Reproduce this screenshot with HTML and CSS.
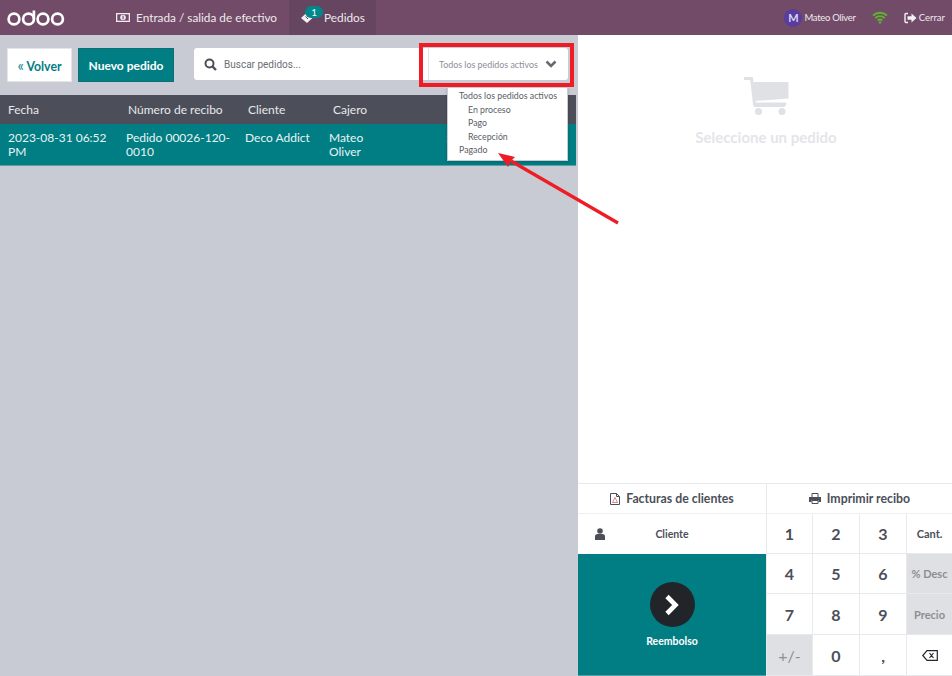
FILE: index.html
```html
<!doctype html>
<html lang="es">
  <head>
    <meta charset="utf-8">
    <title>Pedidos</title>
    <link rel="stylesheet" href="styles.css">
  </head>
  <body>
    <div class="topbar">
      <div class="logo">
        <svg width="58" height="20" viewBox="0 0 58 20" role="img" aria-label="odoo"><g fill="none" stroke="#fff" stroke-width="2.700"><circle cx="7" cy="11" r="5.400"/><circle cx="21.500" cy="11" r="5.400"/><path d="M26.900 11V2.500"/><circle cx="36" cy="11" r="5.400"/><circle cx="50.500" cy="11" r="5.400"/></g></svg>
      </div>
      <div class="tab cash">
        <svg width="14" height="9" viewBox="0 0 14 9"><rect width="14" height="9" fill="#f0e9ee"/><rect x="1.300" y="1.300" width="11.400" height="6.400" fill="#714b67"/><circle cx="7" cy="4.500" r="2.800" fill="#f0e9ee"/><rect x="6.500" y="2.700" width="1.100" height="3.600" fill="#714b67"/></svg>
        Entrada / salida de efectivo
      </div>
      <div class="tab active">
        <svg width="13" height="13" viewBox="0 0 13 13"><path d="M7 1.500 12.500 7 7 12 1 7Z" fill="#f5f0f4"/><path d="M5.500 5.500 8 8" stroke="#654560" stroke-width="1"/></svg>
        <span class="badge">1</span>
        Pedidos
      </div>
      <div class="status">
        <span class="avatar">M</span>
        <span class="user">Mateo Oliver</span>
        <svg class="wifi" width="16" height="13" viewBox="0 0 16 13"><path d="M1 4.500C5 .8 11 .8 15 4.500M3.300 7C6 4.600 10 4.600 12.700 7M5.600 9.400C7 8.300 9 8.300 10.400 9.400" fill="none" stroke="#5cb531" stroke-width="1.800"/><circle cx="8" cy="11.500" r="1.300" fill="#5cb531"/></svg>
        <span class="close">
          <svg width="13" height="12" viewBox="0 0 13 12"><path d="M4 1.500H2Q1 1.500 1 2.500V9.500Q1 10.500 2 10.500H4" fill="none" stroke="#f5f0f4" stroke-width="1.400"/><path d="M3.500 4.200H7.500V1.500L12.500 6 7.500 10.500V7.800H3.500Z" fill="#f5f0f4"/></svg>
          Cerrar
        </span>
      </div>
    </div>

    <div class="main">
      <div class="orders">
        <div class="controls">
          <button class="btn back"><span class="chev">«</span> Volver</button>
          <button class="btn new">Nuevo pedido</button>
          <div class="search">
            <svg width="13" height="13" viewBox="0 0 13 13"><circle cx="5.500" cy="5.500" r="4" fill="none" stroke="#4c4f59" stroke-width="2"/><path d="M8.500 8.500 12 12" stroke="#4c4f59" stroke-width="2.400"/></svg>
            <span>Buscar pedidos...</span>
          </div>
          <div class="filter">
            <span>Todos los pedidos activos</span>
            <svg width="12" height="8" viewBox="0 0 12 8"><path d="M1.500 1.500 6 6 10.500 1.500" fill="none" stroke="#666a73" stroke-width="2.600"/></svg>
          </div>
        </div>
        <div class="table">
          <div class="row head">
            <div class="c-date">Fecha</div>
            <div class="c-num">Número de recibo</div>
            <div class="c-client">Cliente</div>
            <div class="c-cashier">Cajero</div>
          </div>
          <div class="row order">
            <div class="c-date">2023-08-31 06:52 PM</div>
            <div class="c-num">Pedido 00026-120-0010</div>
            <div class="c-client">Deco Addict</div>
            <div class="c-cashier">Mateo Oliver</div>
            <div class="c-total">$</div>
          </div>
        </div>
      </div>

      <div class="detail">
        <div class="empty">
          <svg class="cart" width="46" height="40" viewBox="0 0 46 40"><path d="M1 1.500H7.500L10.500 27H41" fill="none" stroke="#e0e1e5" stroke-width="3" stroke-linecap="round"/><path d="M9 5H44.500V21.500L11 24Z" fill="#e0e1e5"/><circle cx="14.500" cy="34.500" r="3.500" fill="#e0e1e5"/><circle cx="38" cy="34.500" r="3.500" fill="#e0e1e5"/><rect x="10" y="27" width="31" height="3" fill="#e0e1e5"/></svg>
          <div class="empty-text">Seleccione un pedido</div>
        </div>
        <div class="actions">
          <div class="action">
            <svg width="10" height="12" viewBox="0 0 10 12"><path d="M.500.500H6.500L9.500 3.500V11.500H.500Z M6.500.500V3.500H9.500" fill="none" stroke="#4c4f59"/><path d="M2.500 9.500 5 4.500 7.500 9.500Z" fill="none" stroke="#d9534f" stroke-width=".7"/></svg>
            Facturas de clientes
          </div>
          <div class="action">
            <svg width="12" height="11" viewBox="0 0 12 11"><path d="M3 4V.500H9V4" fill="none" stroke="#4c4f59"/><path d="M0 4H12V9H9.500V7H2.500V9H0Z" fill="#4c4f59"/><path d="M3 7.500H9V10.500H3Z" fill="none" stroke="#4c4f59"/></svg>
            Imprimir recibo
          </div>
        </div>
        <div class="pad">
          <div class="customer">
            <svg width="10" height="12" viewBox="0 0 10 12"><circle cx="5" cy="3" r="2.800" fill="#4c4f59"/><path d="M0 12V8.500Q0 6 2.500 6H7.500Q10 6 10 8.500V12Z" fill="#4c4f59"/></svg>
            <span>Cliente</span>
          </div>
          <div class="pay">
            <span class="pay-circle">
              <svg width="16" height="22" viewBox="0 0 16 22"><path d="M3 2.500 11.500 11 3 19.500" fill="none" stroke="#fff" stroke-width="4.600"/></svg>
            </span>
            <span class="pay-label">Reembolso</span>
          </div>
          <div class="keys">
            <div class="key">1</div><div class="key">2</div><div class="key">3</div><div class="key mode">Cant.</div>
            <div class="key">4</div><div class="key">5</div><div class="key">6</div><div class="key mode off">% Desc</div>
            <div class="key">7</div><div class="key">8</div><div class="key">9</div><div class="key mode off">Precio</div>
            <div class="key sign">+/-</div><div class="key">0</div><div class="key">,</div>
            <div class="key">
              <svg width="16" height="11" viewBox="0 0 16 11"><path d="M5 .700H15.300V10.300H5L.800 5.500Z M7.500 3 11.500 8M11.500 3 7.500 8" fill="none" stroke="#23262c" stroke-width="1.200"/></svg>
            </div>
          </div>
        </div>
      </div>
    </div>

    <!-- dropdown + annotation sit over the page -->
    <div class="menu">
      <div>Todos los pedidos activos</div>
      <div class="sub">En proceso</div>
      <div class="sub">Pago</div>
      <div class="sub">Recepción</div>
      <div>Pagado</div>
    </div>
    <div class="redbox"></div>
    <svg class="arrow" width="140" height="90" viewBox="0 0 140 90"><path d="M126 76 19 14" stroke="#ee1c25" stroke-width="3.200"/><path d="M6 6 23 10 19 14 16 20Z" fill="#ee1c25"/></svg>
  </body>
</html>
```

FILE: styles.css
```css
* {
  box-sizing: border-box;
}

body {
  margin: 0;
  width: 952px;
  height: 676px;
  overflow: hidden;
  position: relative;
  background-color: #c8cbd3;
  font-family: Lato, "Liberation Sans", sans-serif;
  color: #4c4f59;
}

.topbar {
  height: 35px;
  display: flex;
  align-items: center;
  background-color: #714b67;
  color: #f0e9ee;
  font-size: 11.800px;
}

.logo {
  width: 102px;
  padding-left: 7px;
  display: flex;
  align-items: center;
}

.tab {
  height: 35px;
  padding: 0 12px 0 14px;
  display: flex;
  align-items: center;
  gap: 6px;
  position: relative;
}

.tab.active {
  background-color: #654560;
  padding: 0 11px;
  gap: 11px;
}

.badge {
  position: absolute;
  left: 16px;
  top: 6px;
  width: 18px;
  height: 12px;
  border-radius: 6px;
  background-color: #00878c;
  color: #f0fafa;
  font-size: 10px;
  line-height: 12px;
  text-align: center;
}

.status {
  margin-left: auto;
  display: flex;
  align-items: center;
  padding-right: 7px;
  font-size: 9.500px;
}

.avatar {
  width: 18px;
  height: 18px;
  border-radius: 50%;
  background-color: #5a3b9e;
  color: #d5d8f5;
  font-weight: bold;
  font-size: 11px;
  line-height: 18px;
  text-align: center;
  margin-right: 2px;
}

.user {
  letter-spacing: -0.3px;
}

.wifi {
  margin: 0 16px;
}

.close {
  display: flex;
  align-items: center;
  gap: 2px;
}

.main {
  height: 641px;
  display: flex;
}

.orders {
  width: 578px;
}

.controls {
  height: 60px;
  padding: 13px 0 0 7px;
  display: flex;
  align-items: flex-start;
}

.btn {
  height: 34px;
  padding: 0;
  font-family: inherit;
  font-weight: bold;
}

.back {
  width: 65px;
  background-color: #fff;
  border: 1px solid #e4e5e9;
  color: #017e84;
  font-size: 12.300px;
}

.chev {
  font-size: 15px;
  font-weight: normal;
}

.new {
  width: 96px;
  margin-left: 6px;
  background-color: #017e84;
  border: 1px solid #0e6f75;
  color: #fff;
  font-size: 12px;
}

.search {
  width: 234px;
  height: 32px;
  margin-left: 20px;
  padding-left: 10px;
  display: flex;
  align-items: center;
  gap: 7px;
  background-color: #fff;
  border-radius: 3px 0 0 3px;
  font-family: Roboto, sans-serif;
  font-size: 10px;
  color: #6b6e76;
}

.filter {
  width: 140px;
  height: 32px;
  padding: 0 11px 0 10px;
  display: flex;
  align-items: center;
  justify-content: space-between;
  background-color: #fff;
  border-left: 1px solid #e4e5e9;
  border-radius: 0 3px 3px 0;
  font-size: 8.900px;
  white-space: nowrap;
  color: #8b8e96;
}

.table {
  width: 576px;
}

.row {
  display: flex;
}

.row > div {
  flex: none;
}

.head {
  height: 29px;
  align-items: center;
  background-color: #4c4f59;
  color: #e8e9ec;
  font-size: 12px;
}

.head .c-date {
  width: 128px;
  padding-left: 8px;
}

.head .c-num {
  width: 120px;
}

.head .c-client {
  width: 85px;
}

.order {
  height: 42px;
  padding-top: 7px;
  background-color: #017e84;
  border-bottom: 1px solid #5f9ea3;
  color: #e8f4f4;
  font-size: 12px;
  line-height: 14px;
}

.order .c-date {
  width: 126px;
  padding: 0 8px;
}

.order .c-num {
  width: 119px;
  padding-right: 10px;
}

.order .c-client {
  width: 84px;
}

.order .c-cashier {
  width: 50px;
}

.order .c-total {
  margin-left: 67px;
}

.detail {
  width: 374px;
  height: 641px;
  display: flex;
  flex-direction: column;
  background-color: #fff;
}

.empty {
  height: 448px;
  padding-top: 42px;
  display: flex;
  flex-direction: column;
  align-items: center;
}

.cart {
  margin-left: 4px;
}

.empty-text {
  margin-top: 11px;
  margin-left: 2px;
  font-size: 15px;
  font-weight: bold;
  color: #e4e5e9;
}

.actions {
  height: 30px;
  display: grid;
  grid-template-columns: 188px 186px;
  border-top: 1px solid #e8e9ec;
  font-size: 12.300px;
  font-weight: bold;
}

.action {
  display: flex;
  align-items: center;
  justify-content: center;
  gap: 6px;
}

.action + .action {
  border-left: 1px solid #e8e9ec;
}

.pad {
  height: 163px;
  display: grid;
  grid-template-columns: 188px 186px;
  grid-template-rows: 40px 122px;
  border-top: 1px solid #eeeff1;
}

.customer {
  display: flex;
  align-items: center;
  padding-left: 17px;
  font-size: 10.500px;
  font-weight: bold;
}

.customer span {
  width: 134px;
  text-align: center;
}

.pay {
  grid-column: 1;
  display: flex;
  flex-direction: column;
  align-items: center;
  padding-top: 28px;
  background-color: #017e84;
  border-bottom: 1px solid #5f9ea3;
  color: #fff;
}

.pay-circle {
  width: 45px;
  height: 45px;
  border-radius: 50%;
  background-color: #212529;
  display: flex;
  align-items: center;
  justify-content: center;
}

.pay-label {
  margin-top: 8px;
  font-size: 10.500px;
  font-weight: bold;
}

.keys {
  grid-column: 2;
  grid-row: 1 / 3;
  display: grid;
  grid-template-columns: 46px 47px 47px 46px;
  grid-template-rows: 40px 40px 41px 41px;
}

.key {
  display: flex;
  align-items: center;
  justify-content: center;
  border-left: 1px solid #e8e9ec;
  border-bottom: 1px solid #e8e9ec;
  font-size: 16px;
  font-weight: bold;
}

.mode {
  font-size: 11px;
}

.off {
  background-color: #dfe0e4;
  color: #8b8e96;
}

.sign {
  background-color: #dfe0e4;
  color: #8b8e96;
  font-weight: normal;
}

.menu {
  position: absolute;
  left: 447px;
  top: 87px;
  width: 121px;
  height: 74px;
  padding: 1px 0 0 11px;
  background-color: #fff;
  border: 1px solid #c9cbd0;
  box-shadow: 0 1px 3px rgba(0,0,0,0.2);
  font-size: 8.800px;
  line-height: 13.500px;
  color: #5a5d66;
}

.sub {
  padding-left: 9px;
}

.redbox {
  position: absolute;
  left: 419px;
  top: 43px;
  width: 155px;
  height: 44px;
  border: 4px solid #ee1c25;
}

.arrow {
  position: absolute;
  left: 492px;
  top: 147px;
}
```
